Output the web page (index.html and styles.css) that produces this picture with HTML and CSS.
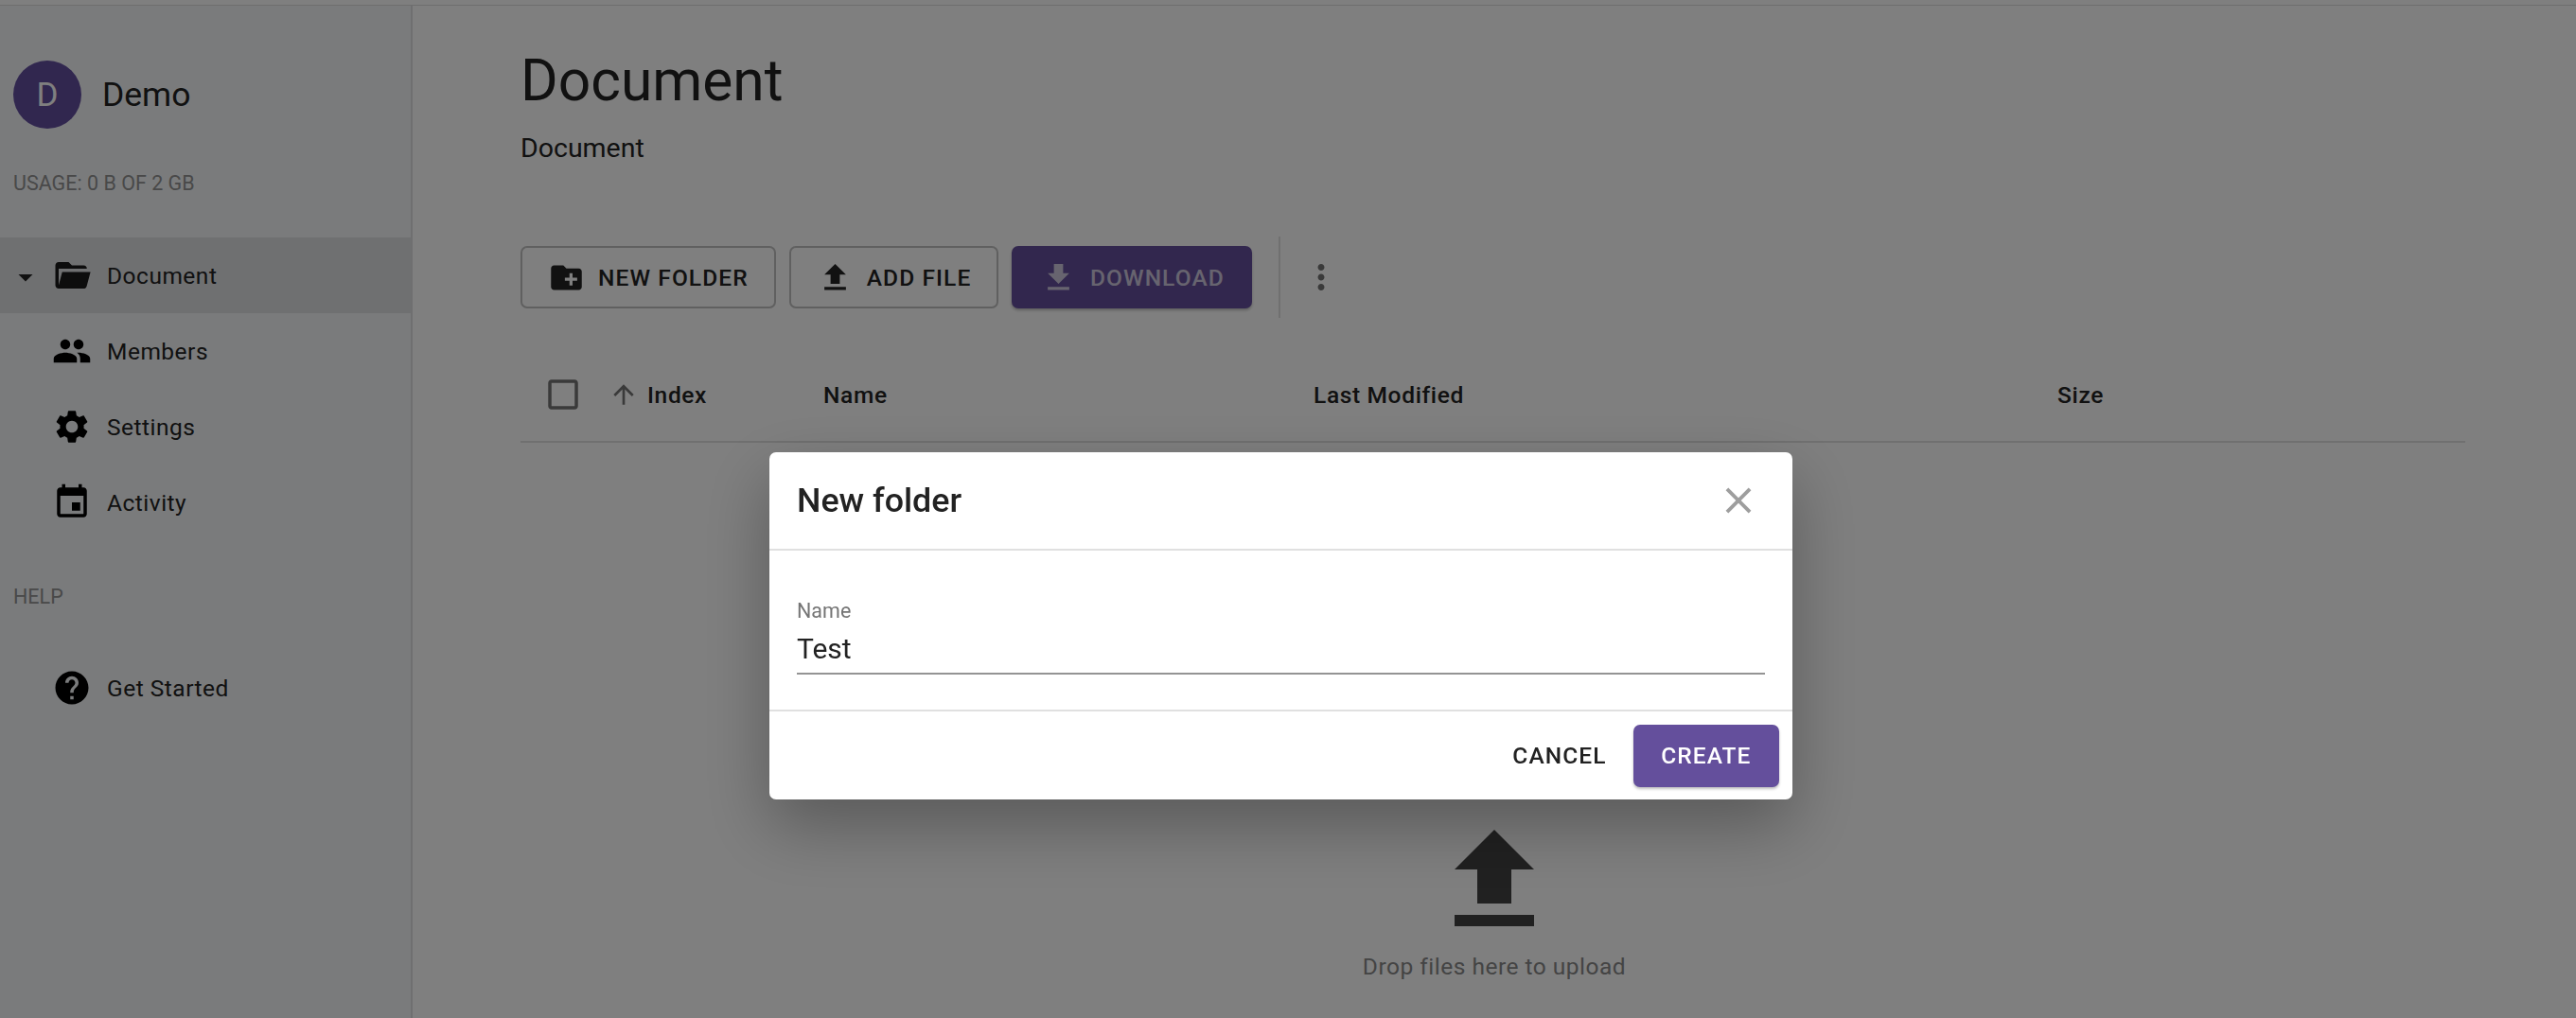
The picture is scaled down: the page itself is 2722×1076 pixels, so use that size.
FILE: index.html
```html
<!DOCTYPE html>
<html lang="en">
<head>
  <meta charset="UTF-8" />
  <meta name="viewport" content="width=device-width, initial-scale=1.0" />
  <title>Document</title>
  <link rel="stylesheet" href="styles.css">
</head>
<body>
  <div class="topbar"></div>
  <div class="app">
    <aside class="sidebar">
      <div class="org">
        <div class="avatar">D</div>
        <div class="org-name">Demo</div>
      </div>
      <div class="usage">Usage: 0 B of 2 GB</div>
      <nav class="nav">
        <div class="nav-row active">
          <svg class="caret" viewBox="0 0 24 24"><path d="M7 10l5 5 5-5z"/></svg>
          <svg class="nav-icon" viewBox="0 0 24 24"><path d="M19,20H4C2.89,20 2,19.1 2,18V6C2,4.89 2.89,4 4,4H10L12,6H19A2,2 0 0,1 21,8H21L4,8V18L6.14,10H23.21L20.93,18.5C20.7,19.37 19.92,20 19,20Z"/></svg>
          <span>Document</span>
        </div>
        <div class="nav-row">
          <svg class="nav-icon" viewBox="0 0 24 24"><path d="M16 11c1.66 0 2.99-1.34 2.99-3S17.66 5 16 5c-1.66 0-3 1.34-3 3s1.34 3 3 3zm-8 0c1.66 0 2.99-1.34 2.99-3S9.66 5 8 5C6.34 5 5 6.34 5 8s1.34 3 3 3zm0 2c-2.33 0-7 1.17-7 3.5V19h14v-2.5c0-2.33-4.67-3.5-7-3.5zm8 0c-.29 0-.62.02-.97.05 1.16.84 1.97 1.97 1.97 3.45V19h6v-2.5c0-2.33-4.67-3.5-7-3.5z"/></svg>
          <span>Members</span>
        </div>
        <div class="nav-row">
          <svg class="nav-icon" viewBox="0 0 24 24"><path d="M19.14 12.94c.04-.3.06-.61.06-.94 0-.32-.02-.64-.07-.94l2.03-1.58c.18-.14.23-.41.12-.61l-1.92-3.32c-.12-.22-.37-.29-.59-.22l-2.39.96c-.5-.38-1.03-.7-1.62-.94l-.36-2.54c-.04-.24-.24-.41-.48-.41h-3.84c-.24 0-.43.17-.47.41l-.36 2.54c-.59.24-1.13.57-1.62.94l-2.39-.96c-.22-.08-.47 0-.59.22L2.74 8.87c-.12.21-.08.47.12.61l2.03 1.58c-.05.3-.09.63-.09.94s.02.64.07.94l-2.03 1.58c-.18.14-.23.41-.12.61l1.92 3.32c.12.22.37.29.59.22l2.39-.96c.5.38 1.03.7 1.62.94l.36 2.54c.05.24.24.41.48.41h3.84c.24 0 .44-.17.47-.41l.36-2.54c.59-.24 1.13-.56 1.62-.94l2.39.96c.22.08.47 0 .59-.22l1.92-3.32c.12-.22.07-.47-.12-.61l-2.01-1.58zM12 15.6c-1.98 0-3.6-1.62-3.6-3.6s1.62-3.6 3.6-3.6 3.6 1.62 3.6 3.6-1.62 3.6-3.6 3.6z"/></svg>
          <span>Settings</span>
        </div>
        <div class="nav-row">
          <svg class="nav-icon" viewBox="0 0 24 24"><path d="M17 12h-5v5h5v-5zM16 1v2H8V1H6v2H5c-1.11 0-1.99.9-1.99 2L3 19c0 1.1.89 2 2 2h14c1.1 0 2-.9 2-2V5c0-1.1-.9-2-2-2h-1V1h-2zm3 18H5V8h14v11z"/></svg>
          <span>Activity</span>
        </div>
      </nav>
      <div class="nav-label">Help</div>
      <nav class="nav">
        <div class="nav-row">
          <svg class="nav-icon" viewBox="0 0 24 24"><path d="M12 2C6.48 2 2 6.48 2 12s4.48 10 10 10 10-4.48 10-10S17.52 2 12 2zm1 17h-2v-2h2v2zm2.07-7.75l-.9.92C13.45 12.9 13 13.5 13 15h-2v-.5c0-1.1.45-2.1 1.17-2.83l1.24-1.26c.37-.36.59-.86.59-1.41 0-1.1-.9-2-2-2s-2 .9-2 2H8c0-2.21 1.79-4 4-4s4 1.79 4 4c0 .88-.36 1.68-.93 2.25z"/></svg>
          <span>Get Started</span>
        </div>
      </nav>
    </aside>

    <main class="main">
      <h1 class="title">Document</h1>
      <div class="subtitle">Document</div>

      <div class="toolbar">
        <button class="btn outline">
          <svg class="btn-icon" viewBox="0 0 24 24"><path d="M20 6h-8l-2-2H4c-1.11 0-1.99.89-1.99 2L2 18c0 1.11.89 2 2 2h16c1.11 0 2-.89 2-2V8c0-1.11-.89-2-2-2zm-1 8h-3v3h-2v-3h-3v-2h3V9h2v3h3v2z"/></svg>
          New folder
        </button>
        <button class="btn outline">
          <svg class="btn-icon" viewBox="0 0 24 24"><path d="M9 16h6v-6h4l-7-7-7 7h4zm-4 2h14v2H5z"/></svg>
          Add file
        </button>
        <button class="btn primary disabled">
          <svg class="btn-icon" viewBox="0 0 24 24"><path d="M19 9h-4V3H9v6H5l7 7 7-7zM5 18v2h14v-2H5z"/></svg>
          Download
        </button>
        <div class="toolbar-divider"></div>
        <svg class="more" viewBox="0 0 24 24"><path d="M12 8c1.1 0 2-.9 2-2s-.9-2-2-2-2 .9-2 2 .9 2 2 2zm0 2c-1.1 0-2 .9-2 2s.9 2 2 2 2-.9 2-2-.9-2-2-2zm0 6c-1.1 0-2 .9-2 2s.9 2 2 2 2-.9 2-2-.9-2-2-2z"/></svg>
      </div>

      <div class="table-head">
        <div class="cell first">
          <svg class="check" viewBox="0 0 24 24"><path d="M19 5v14H5V5h14m0-2H5c-1.1 0-2 .9-2 2v14c0 1.1.9 2 2 2h14c1.1 0 2-.9 2-2V5c0-1.1-.9-2-2-2z"/></svg>
          <svg class="sort" viewBox="0 0 24 24"><path d="M4 12l1.41 1.41L11 7.83V20h2V7.83l5.58 5.59L20 12l-8-8-8 8z"/></svg>
          <span>Index</span>
        </div>
        <div class="cell">Name</div>
        <div class="cell">Last Modified</div>
        <div class="cell">Size</div>
      </div>

      <div class="dropzone">
        <svg class="drop-icon" viewBox="0 0 24 24"><path d="M9 16h6v-6h4l-7-7-7 7h4zm-4 2h14v2H5z"/></svg>
        <div class="drop-text">Drop files here to upload</div>
      </div>
    </main>
  </div>

  <div class="backdrop">
    <div class="dialog">
      <div class="dialog-head">
        <div class="dialog-title">New folder</div>
        <svg class="close" viewBox="0 0 24 24"><path d="M19 6.41L17.59 5 12 10.59 6.41 5 5 6.41 10.59 12 5 17.59 6.41 19 12 13.41 17.59 19 19 17.59 13.41 12z"/></svg>
      </div>
      <div class="dialog-body">
        <label class="field-label" for="folderName">Name</label>
        <input class="field-input" id="folderName" type="text" value="Test" />
      </div>
      <div class="dialog-foot">
        <button class="btn text">Cancel</button>
        <button class="btn primary">Create</button>
      </div>
    </div>
  </div>
</body>
</html>
```

FILE: styles.css
```css
* { box-sizing: border-box; }
html, body { height: 100%; }
body { margin: 0; overflow: hidden; background: #fff; color: #222; font-family: Roboto, "Liberation Sans", sans-serif; }

.topbar { height: 6px; border-bottom: 1px solid #ddd; }
.app { display: flex; height: 1070px; }

/* sidebar */
.sidebar { width: 436px; flex: none; padding-top: 58px; background: #f5f7f9; border-right: 2px solid #dedfe0; }
.org { display: flex; align-items: center; gap: 22px; padding-left: 14px; }
.avatar { width: 72px; height: 72px; border-radius: 50%; background: #624e9f; color: #fff; font-size: 35px; display: flex; align-items: center; justify-content: center; }
.org-name { font-size: 35.5px; color: #222; }
.usage { margin: 44px 0 43px; padding-left: 14px; height: 28px; line-height: 28px; font-size: 21.5px; color: #929292; text-transform: uppercase; }
.nav-label { margin: 45px 0 41px; padding-left: 14px; height: 30px; line-height: 30px; font-size: 21.5px; color: #929292; text-transform: uppercase; }

.nav-row { position: relative; height: 80px; padding-left: 55px; display: flex; align-items: center; gap: 16px; font-size: 24.5px; letter-spacing: .5px; color: #222; }
.nav-row.active { background: #dfe0e2; }
.nav-icon { width: 42px; height: 42px; flex: none; fill: #000; }
.nav-row.active .nav-icon { fill: #1a1a1a; }
.caret { position: absolute; left: 9px; top: 24px; width: 36px; height: 36px; fill: #222; }

/* main */
.main { flex: 1; min-width: 0; padding: 0 117px 0 114px; }
.title { margin: 45px 0 0; height: 70px; line-height: 70px; font-size: 60.5px; font-weight: 400; color: #222; }
.subtitle { margin-top: 21px; height: 30px; line-height: 30px; font-size: 28.5px; color: #222; }

.toolbar { display: flex; align-items: center; gap: 14px; margin-top: 78px; height: 86px; }
.btn { height: 66px; display: inline-flex; align-items: center; justify-content: center; border-radius: 7px; border: 0; background: none; font-family: inherit; font-size: 24.5px; font-weight: 500; letter-spacing: 1.1px; text-transform: uppercase; color: #222; }
.btn.outline { border: 2px solid #c0c0c0; padding: 0 27px; gap: 14px; }
.btn.primary { background: #644f9c; color: #fff; padding: 0 29.5px; gap: 14px; box-shadow: 0 2px 3px rgba(0,0,0,.25); }
.btn.primary.disabled { color: #cfc8df; }
.btn.text { padding: 0 28px; }
.btn-icon { width: 39px; height: 39px; flex: none; fill: currentColor; }
.toolbar-divider { width: 2px; height: 86px; margin-left: 14px; background: #e0e0e0; }
.more { width: 42px; height: 42px; margin-left: 8px; fill: #757575; }

.table-head { display: grid; grid-template-columns: 320px 518px 786px 1fr; align-items: center; height: 100px; margin-top: 32px; border-bottom: 2px solid #e0e0e0; font-size: 24.5px; font-weight: 500; letter-spacing: .65px; color: #222; }
.cell.first { display: flex; align-items: center; padding-left: 24px; }
.check { width: 42px; height: 42px; fill: #757575; margin-right: 27px; }
.sort { width: 32px; height: 32px; fill: #757575; margin-right: 9px; }

.dropzone { margin-top: 391px; padding-left: 3px; display: flex; flex-direction: column; align-items: center; }
.drop-icon { width: 144px; height: 144px; fill: #424242; }
.drop-text { margin-top: 4px; font-size: 24.5px; letter-spacing: .5px; color: #888; }

/* new folder dialog */
.backdrop { position: fixed; inset: 0; padding: 478px 0 0 813px; background: rgba(0,0,0,.5); }
.dialog { width: 1081px; height: 367px; background: #fff; border-radius: 7px; box-shadow: 0 28px 70px rgba(0,0,0,.3); display: flex; flex-direction: column; }
.dialog-head { height: 104px; flex: none; display: flex; align-items: center; justify-content: space-between; padding: 0 34px 0 29px; border-bottom: 2px solid #e0e0e0; }
.dialog-title { font-size: 35.8px; font-weight: 500; color: #222; }
.close { width: 46px; height: 46px; fill: #9e9e9e; }
.dialog-body { height: 170px; flex: none; padding: 50px 29px 0; border-bottom: 2px solid #e0e0e0; }
.field-label { display: block; font-size: 21.5px; line-height: 28px; color: #757575; }
.field-input { display: block; width: 100%; height: 53px; padding: 0; border: 0; border-bottom: 2px solid #949494; outline: 0; background: none; font-family: inherit; font-size: 30px; color: #222; }
.dialog-foot { flex: 1; display: flex; align-items: center; justify-content: flex-end; gap: 0; padding-right: 14px; }
```
